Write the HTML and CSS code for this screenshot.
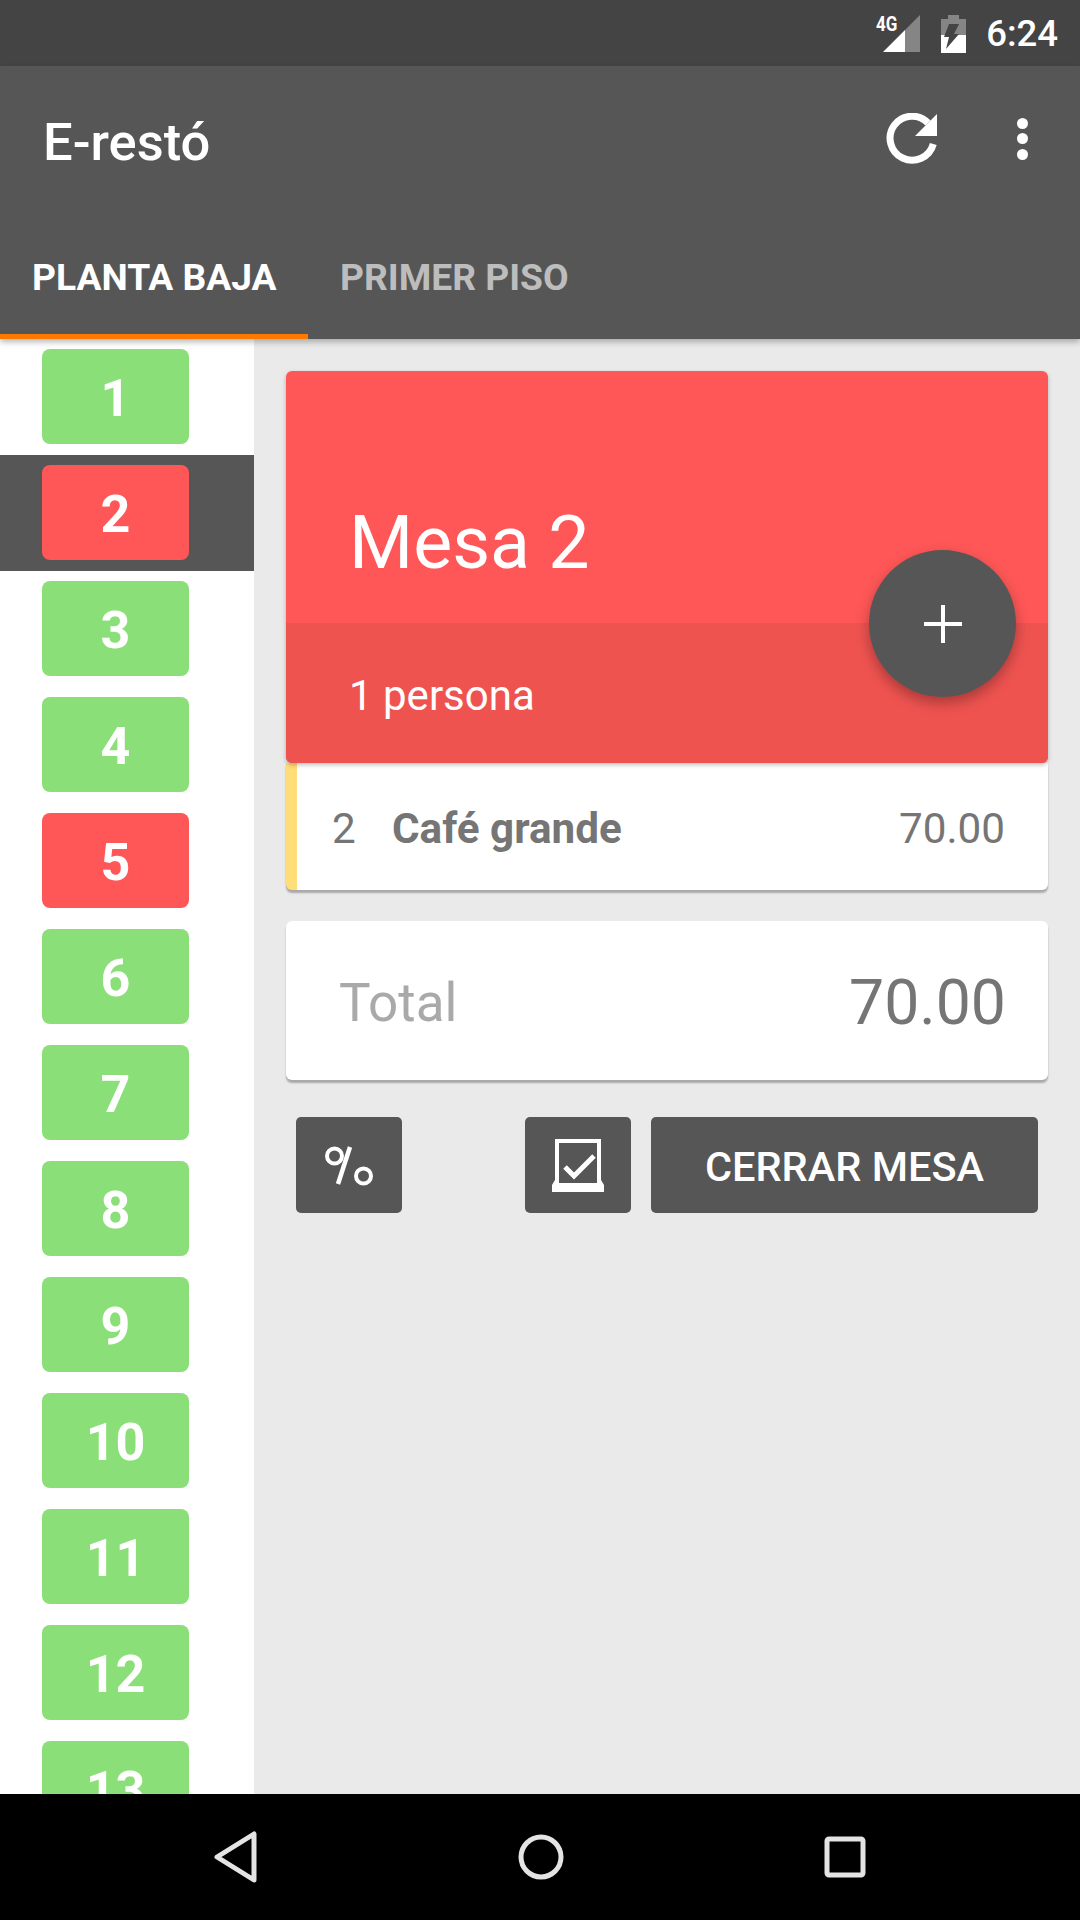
FILE: index.html
```html
<!DOCTYPE html>
<html lang="es">
<head>
<meta charset="utf-8">
<title>E-restó</title>
<link rel="stylesheet" href="styles.css">
</head>
<body>
<div class="app">
  <div class="status">
    <svg class="st-signal" viewBox="0 0 37 37" width="37" height="37">
      <path class="lit" d="M0 37 L22 15 V37Z"/>
      <path class="dim" d="M22 37 V15 L37 0 V37Z"/>
    </svg>
    <span class="st-4g">4G</span>
    <svg class="st-batt" viewBox="0 0 25 38" width="25" height="38">
      <path class="dim" d="M7 0 H18 V4 H25 V20 H0 V4 H7Z"/>
      <path class="lit" d="M0 20 H25 V38 H0Z"/>
      <path class="bolt" d="M8 9 H18 L13 19 H18 L5 34 L8 22 H3Z"/>
    </svg>
    <span class="st-time">6:24</span>
  </div>
  <header class="appbar">
    <div class="toolbar">
      <h1 class="title">E-restó</h1>
      <svg class="ic-refresh" viewBox="0 0 52 52" width="52" height="52">
        <path class="refresh-arc" d="M42 10 A22 22 0 1 0 47.3 31"/>
        <path class="lit" d="M51 1 V23 H29Z"/>
      </svg>
      <div class="overflow"><i></i><i></i><i></i></div>
    </div>
    <nav class="tabs">
      <div class="tab active">PLANTA BAJA</div>
      <div class="tab">PRIMER PISO</div>
    </nav>
  </header>
  <div class="content">
    <aside class="tables">
      <div class="row"><div class="cell free">1</div></div>
      <div class="row selected"><div class="cell busy">2</div></div>
      <div class="row"><div class="cell free">3</div></div>
      <div class="row"><div class="cell free">4</div></div>
      <div class="row"><div class="cell busy">5</div></div>
      <div class="row"><div class="cell free">6</div></div>
      <div class="row"><div class="cell free">7</div></div>
      <div class="row"><div class="cell free">8</div></div>
      <div class="row"><div class="cell free">9</div></div>
      <div class="row"><div class="cell free">10</div></div>
      <div class="row"><div class="cell free">11</div></div>
      <div class="row"><div class="cell free">12</div></div>
      <div class="row"><div class="cell free">13</div></div>
    </aside>
    <main class="detail">
      <section class="hero">
        <div class="hero-top"><h2 class="mesa">Mesa 2</h2></div>
        <div class="hero-bottom">1 persona</div>
        <div class="fab">
          <svg viewBox="0 0 38 38" width="38" height="38"><path d="M19 0V38M0 19H38" class="plus"/></svg>
        </div>
      </section>
      <section class="item">
        <span class="qty">2</span>
        <span class="name">Café grande</span>
        <span class="price">70.00</span>
      </section>
      <section class="total">
        <span class="total-label">Total</span>
        <span class="total-value">70.00</span>
      </section>
      <div class="actions">
        <button class="btn btn-icon">
          <svg viewBox="0 0 48 44" width="48" height="44">
            <circle class="line" cx="9.5" cy="13" r="7.5"/>
            <circle class="line" cx="38.5" cy="33" r="7.5"/>
            <path class="line pct-slash" d="M25 4 L13 41"/>
          </svg>
        </button>
        <button class="btn btn-icon push">
          <svg viewBox="0 0 52 53" width="52" height="53">
            <path class="line" d="M5 2 H47 V46 H5Z"/>
            <path class="lit" d="M0 53 V46 L3 41 V46 H49 V41 L52 46 V53Z"/>
            <path class="line check" d="M13 28 L22 37 L42 17"/>
          </svg>
        </button>
        <button class="btn btn-text">CERRAR MESA</button>
      </div>
    </main>
  </div>
  <footer class="navbar">
    <svg viewBox="0 0 44 52" width="44" height="52"><path class="nav-line" d="M40 3 V49 L3 26Z"/></svg>
    <svg viewBox="0 0 46 46" width="46" height="46"><circle class="nav-line" cx="23" cy="23" r="20"/></svg>
    <svg viewBox="0 0 42 42" width="42" height="42"><rect class="nav-line" x="3" y="3" width="36" height="36" rx="2"/></svg>
  </footer>
</div>
</body>
</html>
```
FILE: styles.css
```css
* { box-sizing: border-box; margin: 0; padding: 0; }
html, body { width: 1080px; height: 1920px; overflow: hidden; }
body { font-family: Roboto, "Noto Sans", sans-serif; background: #eaeaea; }
.app { width: 1080px; height: 1920px; display: flex; flex-direction: column; position: relative; }

.lit { fill: #fff; }
.dim { fill: #858585; }
.status { height: 66px; flex: none; background: #444; display: flex; align-items: center; justify-content: flex-end; padding-right: 22px; position: relative; color: #fff; }
.st-signal { margin-right: 21px; margin-top: 1px; }
.st-4g { position: absolute; left: 876px; top: 12px; font-size: 20px; font-weight: 700; transform: scaleX(.85); transform-origin: left; }
.st-batt { margin-right: 20px; margin-top: 1px; }
.bolt { fill: #444; }
.st-time { font-size: 36.5px; font-weight: 500; }

.appbar { height: 273px; flex: none; background: #565656; color: #fff; display: flex; flex-direction: column; position: relative; z-index: 2; box-shadow: 0 3px 6px rgba(0,0,0,.28); }
.toolbar { height: 143px; display: flex; align-items: center; padding: 0 0 0 43px; }
.title { font-size: 52.5px; font-weight: 500; flex: 1; padding-top: 9px; }
.ic-refresh { margin-right: 79px; margin-top: 2px; }
.refresh-arc { fill: none; stroke: #fff; stroke-width: 7px; }
.overflow { display: flex; flex-direction: column; gap: 4.5px; margin-right: 52px; margin-top: 2px; }
.overflow i { display: block; width: 11px; height: 11px; border-radius: 50%; background: #fff; }
.tabs { flex: 1; display: flex; }
.tab { height: 130px; padding: 46px 32px 0; font-size: 37.2px; font-weight: 700; color: #bdbdbd; white-space: nowrap; }
.tab.active { color: #fff; width: 308px; border-bottom: 5px solid #ff7800; }

.content { flex: 1; display: flex; min-height: 0; }
.tables { width: 254px; flex: none; background: #fff; overflow: hidden; }
.row { height: 116px; padding: 10px 0 0 42px; }
.row.selected { background: #565656; }
.cell { width: 147px; height: 95px; border-radius: 8px; padding-top: 3px; color: #fff; font-size: 52px; font-weight: 700; display: flex; align-items: center; justify-content: center; }
.free { background: #8bdf78; }
.busy { background: #ff5757; }

.detail { flex: 1; padding: 32px 32px 0; display: flex; flex-direction: column; min-width: 0; }
.hero { height: 392px; position: relative; z-index: 1; border-radius: 6px; color: #fff; display: flex; flex-direction: column; box-shadow: 0 2px 4px rgba(0,0,0,.25); background: #ff5757; }
.hero-top { height: 252px; padding: 136px 0 0 63px; }
.mesa { font-size: 73.5px; font-weight: 400; line-height: 1; }
.hero-bottom { flex: 1; background: #ef5350; border-radius: 0 0 6px 6px; padding: 48px 0 0 63px; font-size: 42px; }
.fab { position: absolute; left: 583px; top: 179px; width: 147px; height: 147px; border-radius: 50%; background: #565656; display: flex; align-items: center; justify-content: center; box-shadow: 0 6px 14px rgba(0,0,0,.3); }
.plus { stroke: #fff; stroke-width: 4px; fill: none; }

.item { height: 127px; flex: none; background: #fff; border-left: 11px solid #ffdd78; border-radius: 0 0 6px 6px; display: flex; align-items: center; padding: 4px 43px 0 35px; color: #757575; box-shadow: 0 3px 2px rgba(0,0,0,.28); font-size: 42.2px; }
.qty { width: 60px; }
.name { flex: 1; font-weight: 700; }

.total { height: 159px; flex: none; margin-top: 31px; background: #fff; border-radius: 6px; display: flex; align-items: center; justify-content: space-between; padding: 4px 42px 0 53px; box-shadow: 0 3px 2px rgba(0,0,0,.28); }
.total-label { font-size: 53px; color: #a9a9a9; }
.total-value { font-size: 62.5px; color: #757575; }

.actions { display: flex; gap: 20px; margin-top: 37px; padding: 0 10px; }
.btn { height: 96px; border: 0; border-radius: 5px; background: #565656; color: #fff; font-family: inherit; display: flex; align-items: center; justify-content: center; }
.btn-icon { width: 106px; }
.btn-icon.push { margin-left: auto; }
.btn-text { width: 387px; font-size: 41.5px; font-weight: 500; padding-top: 3px; }
.line { fill: none; stroke: #fff; stroke-width: 4px; }
.pct-slash { stroke-width: 4.5px; }
.check { stroke-width: 5px; }

.navbar { height: 126px; flex: none; background: #000; display: flex; align-items: center; justify-content: space-between; padding: 0 214px; }
.nav-line { fill: none; stroke: #e4e4e4; stroke-width: 5px; stroke-linejoin: round; }
```
